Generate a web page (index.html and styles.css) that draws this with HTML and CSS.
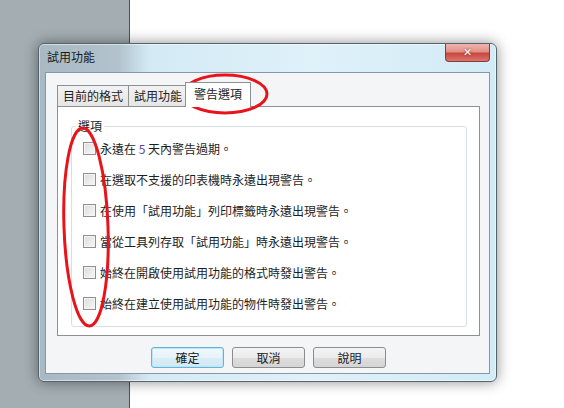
FILE: index.html
```html
<!DOCTYPE html>
<html lang="zh-Hant">
<head>
    <meta charset="UTF-8">
    <title>試用功能</title>
    <link rel="stylesheet" href="styles.css">
</head>
<body>
    <div class="desktop">
        <div class="sidebar"></div>
        <div class="main"></div>
    </div>

    <div class="window">
        <div class="titlebar">
            <span class="title">試用功能</span>
            <button type="button" class="close">&#x2715;</button>
        </div>
        <div class="client">
            <div class="tabs">
                <div class="tab">目前的格式</div>
                <div class="tab">試用功能</div>
                <div class="tab active">警告選項</div>
            </div>
            <div class="panel">
                <fieldset class="group">
                    <legend>選項</legend>
                    <label class="row"><input type="checkbox"><span>永遠在 <b class="num">5</b> 天內警告過期。</span></label>
                    <label class="row"><input type="checkbox"><span>在選取不支援的印表機時永遠出現警告。</span></label>
                    <label class="row"><input type="checkbox"><span>在使用「試用功能」列印標籤時永遠出現警告。</span></label>
                    <label class="row"><input type="checkbox"><span>當從工具列存取「試用功能」時永遠出現警告。</span></label>
                    <label class="row"><input type="checkbox"><span>始終在開啟使用試用功能的格式時發出警告。</span></label>
                    <label class="row"><input type="checkbox"><span>始終在建立使用試用功能的物件時發出警告。</span></label>
                </fieldset>
            </div>
            <div class="buttons">
                <button type="button" class="btn default">確定</button>
                <button type="button" class="btn">取消</button>
                <button type="button" class="btn">說明</button>
            </div>
        </div>
    </div>

    <!-- red annotation marks drawn over the screenshot -->
    <svg class="marks" width="564" height="408" viewBox="0 0 564 408">
        <ellipse cx="225" cy="94" rx="42" ry="19" />
        <ellipse cx="86" cy="227" rx="22" ry="99" transform="rotate(-2 86 227)" />
    </svg>
</body>
</html>
```

FILE: styles.css
```css
body {
    margin: 0;
    width: 564px;
    height: 408px;
    overflow: hidden;
    font-family: "Noto Sans CJK TC", "Liberation Sans", sans-serif;
    font-size: 12px;
    color: #1e1e1e;
}
.desktop {
    display: flex;
    height: 408px;
}
.sidebar {
    width: 129px;
    background-color: #a3adb2;
    border-right: 1px solid #4b5256;
}
.main {
    flex: 1;
    background-color: #ffffff;
}

/* dialog window */
.window {
    position: absolute;
    left: 38px;
    top: 43px;
    width: 457px;
    height: 337px;
    border: 1px solid #56626c;
    border-radius: 6px;
    background: linear-gradient(to right, #a8b9c4 0, #b2c3cd 80px, #d3eaf5 110px, #dff1f9 60%, #d2ebf6 100%);
    box-shadow: 0 0 14px rgba(0, 0, 0, 0.45), inset 0 0 0 1px rgba(255, 255, 255, 0.5);
    display: flex;
    flex-direction: column;
}
.titlebar {
    position: relative;
    height: 28px;
    padding-left: 8px;
    display: flex;
    align-items: center;
}
.title {
    line-height: 14px;
    color: #1a1a1a;
    margin-top: -2px;
}
.close {
    position: absolute;
    top: 0;
    right: 6px;
    width: 45px;
    height: 18px;
    padding: 0;
    border: 1px solid #8a3a36;
    border-top: none;
    border-radius: 0 0 4px 4px;
    background: linear-gradient(#eeb4ae 0, #e39189 45%, #c9463e 55%, #d8776d 100%);
    color: #ffffff;
    font-family: "DejaVu Sans", sans-serif;
    font-size: 11px;
    font-weight: bold;
    line-height: 16px;
    text-shadow: 0 0 2px #7a1f1a;
}

/* client area */
.client {
    flex: 1;
    margin: 0 6px 7px 6px;
    border: 1px solid #8797a5;
    background-color: #f4f5f6;
    padding: 12px 9px 0 11px;
    display: flex;
    flex-direction: column;
}
.tabs {
    display: flex;
    height: 21px;
    align-items: flex-end;
    position: relative;
    z-index: 1;
}
.tab {
    height: 20px;
    padding: 0 5px;
    border: 1px solid #8e9194;
    border-bottom: none;
    margin-right: -1px;
    background: linear-gradient(#f2f2f2, #e6e6e6);
    line-height: 20px;
    color: #222;
}
.tab.active {
    height: 24px;
    margin: 0 0 -1px -2px;
    padding: 0 8px;
    background: #ffffff;
    line-height: 22px;
}
.panel {
    height: 228px;
    border: 1px solid #8e9194;
    background-color: #ffffff;
    padding: 0 12px 0 13px;
}

/* group box */
.group {
    margin: 12px 0 0 0;
    padding: 0 4px 7px 4px;
    border: 1px solid #d5dfe5;
    border-radius: 3px;
}
.group legend {
    padding: 0 2px;
    line-height: 14px;
}
.row {
    height: 31px;
    padding-left: 7px;
    display: flex;
    align-items: center;
    line-height: 14px;
}
.row input {
    appearance: none;
    width: 13px;
    height: 13px;
    margin: 0 4px 0 0;
    border: 1px solid #8f8f8f;
    background: linear-gradient(135deg, #dcdcdc, #f7f7f7);
    box-shadow: inset 0 0 0 1px #f4f4f4;
}
.num {
    font-weight: normal;
    color: #5a3fa0;
}

/* dialog buttons */
.buttons {
    display: flex;
    justify-content: center;
    gap: 8px;
    margin-top: 11px;
}
.btn {
    width: 73px;
    height: 21px;
    padding: 0;
    border: 1px solid #8c8c8c;
    border-radius: 3px;
    background: linear-gradient(#f4f4f4 0, #ebebeb 50%, #dddddd 51%, #d5d5d5 100%);
    font-family: "Noto Sans CJK TC", sans-serif;
    font-size: 12px;
    line-height: 18px;
    color: #1a1a1a;
}
.btn.default {
    border-color: #61b4de;
    background: linear-gradient(#f2f9fc 0, #e6f3f9 50%, #d9edf5 51%, #d2e9f3 100%);
    box-shadow: inset 0 0 0 1px #bfe6f8;
}

.marks {
    position: absolute;
    left: 0;
    top: 0;
    pointer-events: none;
}
.marks ellipse {
    fill: none;
    stroke: #e8141b;
    stroke-width: 3;
}
```
